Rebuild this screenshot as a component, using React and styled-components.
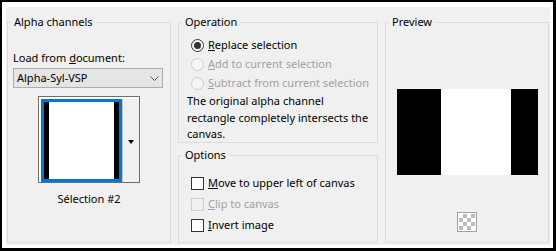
import React from "react";
import styled, { createGlobalStyle } from "styled-components";

const GlobalStyle = createGlobalStyle`
  html, body {
    margin: 0;
    padding: 0;
    background: #ffffff;
  }
  body {
    font-family: "Noto Sans", "Open Sans", sans-serif;
    font-size: 11px;
    color: #000000;
  }
`

const Frame = styled.div`
    width: 556px;
    height: 251px;
    box-sizing: border-box;
    border: 2px solid #000000;
    border-right-width: 3px;
    border-bottom-width: 3px;
    padding: 5px 3px 3px 4px;
    background: #ffffff;
`

const Dialog = styled.div`
    height: 100%;
    box-sizing: border-box;
    background: #f0f0f0;
    padding: 7px 1px 2px 1px;
    display: flex;
    gap: 7px;
`

const Column = styled.div`
    display: flex;
    flex-direction: column;
    gap: 4px;
`

const Group = styled.fieldset`
    margin: 0;
    padding: 0;
    min-width: 0;
    box-sizing: border-box;
    border: 1px solid #dcdcdc;
    width: ${p => p.$width}px;
    height: ${p => p.$height}px;
    display: flex;
    flex-direction: column;
`

const Legend = styled.legend`
    font-size: 11px;
    line-height: 16px;
    padding: 0 3px;
    margin-left: 3px;
`

const AlphaBody = styled.div`
    display: flex;
    flex-direction: column;
    padding: 20px 5px 0 5px;
`

const Text = styled.div`
    line-height: 16px;
    white-space: nowrap;
    color: ${p => (p.$disabled ? "#a0a0a0" : "#000000")};
`

const Select = styled.div`
    margin-top: 2px;
    height: 20px;
    width: 150px;
    box-sizing: border-box;
    border: 1px solid #adadad;
    background: #e5e5e5;
    display: flex;
    align-items: center;
    justify-content: space-between;
    padding: 0 3px 0 3px;
    line-height: 16px;
`

const Thumb = styled.div`
    align-self: center;
    margin-top: 8px;
    display: flex;
    border: 1px solid #6e6e6e;
    background: #ffffff;
    padding: 2px 0 0 2px;
`

const ThumbFrame = styled.div`
    border: 3px solid #0078d7;
`

const ThumbImage = styled.div`
    width: 75px;
    height: 77px;
    box-sizing: border-box;
    background: #ffffff;
    border-left: 5px solid #000000;
    border-right: 5px solid #000000;
`

const ThumbButton = styled.div`
    width: 17px;
    box-sizing: border-box;
    border-left: 1px solid #c8c8c8;
    background: #f0f0f0;
    display: flex;
    align-items: center;
    justify-content: center;
`

const Arrow = styled.div`
    width: 0;
    height: 0;
    margin-top: 2px;
    border-left: 3.5px solid transparent;
    border-right: 3.5px solid transparent;
    border-top: 4px solid #000000;
`

const Caption = styled.div`
    margin-top: 8px;
    text-align: center;
    line-height: 16px;
`

const OperationBody = styled.div`
    padding-top: 5px;
    display: flex;
    flex-direction: column;
`

const OptionRow = styled.div`
    display: flex;
    align-items: center;
    height: ${p => p.$height}px;
    padding-left: 12px;
    line-height: 16px;
    white-space: nowrap;
    color: ${p => (p.$disabled ? "#a0a0a0" : "#000000")};
`

const Radio = styled.span`
    width: 13px;
    height: 13px;
    box-sizing: border-box;
    margin: 1px 4px 0 0;
    border-radius: 50%;
    border: 1px solid ${p => (p.$disabled ? "#cccccc" : "#333333")};
    background: ${p => (p.$disabled ? "#f5f5f5" : "#ffffff")};
    display: flex;
    align-items: center;
    justify-content: center;
    flex-shrink: 0;

    &::after {
        content: "";
        width: 7px;
        height: 7px;
        border-radius: 50%;
        background: ${p => (p.$checked ? "#333333" : "transparent")};
    }
`

const Checkbox = styled.span`
    width: 13px;
    height: 13px;
    box-sizing: border-box;
    margin: 1px 4px 0 0;
    border: 1px solid ${p => (p.$disabled ? "#cccccc" : "#333333")};
    background: ${p => (p.$disabled ? "#f0f0f0" : "#ffffff")};
    flex-shrink: 0;
`

const Description = styled.div`
    padding-left: 8px;
    margin-top: 1px;
    line-height: 16.5px;
    white-space: nowrap;
`

const OptionsBody = styled.div`
    padding-top: 9px;
    display: flex;
    flex-direction: column;
`

const PreviewBody = styled.div`
    display: flex;
    flex-direction: column;
    align-items: center;
    padding-top: 59px;
`

const PreviewImage = styled.div`
    width: 141px;
    height: 86px;
    box-sizing: border-box;
    background: #ffffff;
    border-left: 44px solid #000000;
    border-right: 27px solid #000000;
`

const Checker = styled.div`
    margin-top: 37px;
    width: 20px;
    height: 20px;
    box-sizing: border-box;
    border: 1px solid #a0a0a0;
    padding: 1px;
    background: #ffffff;

    &::after {
        content: "";
        display: block;
        width: 16px;
        height: 16px;
        background: repeating-conic-gradient(#bdbdbd 0 25%, #ffffff 0 50%) 0 0 / 8px 8px;
    }
`

function App() {
    return (
        <>
            <GlobalStyle />
            <Frame>
                <Dialog>
                    <Group $width={164} $height={229}>
                        <Legend>Alpha channels</Legend>
                        <AlphaBody>
                            <Text>Load from <u>d</u>ocument:</Text>
                            <Select>
                                <span>Alpha-Syl-VSP</span>
                                <svg width="9" height="5" viewBox="0 0 9 5">
                                    <polyline points="0.5,0.5 4.5,4.5 8.5,0.5" fill="none" stroke="#555555" strokeWidth="1" />
                                </svg>
                            </Select>
                            <Thumb>
                                <ThumbFrame>
                                    <ThumbImage />
                                </ThumbFrame>
                                <ThumbButton>
                                    <Arrow />
                                </ThumbButton>
                            </Thumb>
                            <Caption>Sélection #2</Caption>
                        </AlphaBody>
                    </Group>
                    <Column>
                        <Group $width={200} $height={129}>
                            <Legend>Operation</Legend>
                            <OperationBody>
                                <OptionRow $height={19}>
                                    <Radio $checked />
                                    <span><u>R</u>eplace selection</span>
                                </OptionRow>
                                <OptionRow $height={19} $disabled>
                                    <Radio $disabled />
                                    <span><u>A</u>dd to current selection</span>
                                </OptionRow>
                                <OptionRow $height={19} $disabled>
                                    <Radio $disabled />
                                    <span><u>S</u>ubtract from current selection</span>
                                </OptionRow>
                                <Description>
                                    The original alpha channel<br />
                                    rectangle completely intersects the<br />
                                    canvas.
                                </Description>
                            </OperationBody>
                        </Group>
                        <Group $width={200} $height={96}>
                            <Legend>Options</Legend>
                            <OptionsBody>
                                <OptionRow $height={21}>
                                    <Checkbox />
                                    <span><u>M</u>ove to upper left of canvas</span>
                                </OptionRow>
                                <OptionRow $height={21} $disabled>
                                    <Checkbox $disabled />
                                    <span><u>C</u>lip to canvas</span>
                                </OptionRow>
                                <OptionRow $height={21}>
                                    <Checkbox />
                                    <span><u>I</u>nvert image</span>
                                </OptionRow>
                            </OptionsBody>
                        </Group>
                    </Column>
                    <Group $width={164} $height={229}>
                        <Legend>Preview</Legend>
                        <PreviewBody>
                            <PreviewImage />
                            <Checker />
                        </PreviewBody>
                    </Group>
                </Dialog>
            </Frame>
        </>
    );
}

export default App;
